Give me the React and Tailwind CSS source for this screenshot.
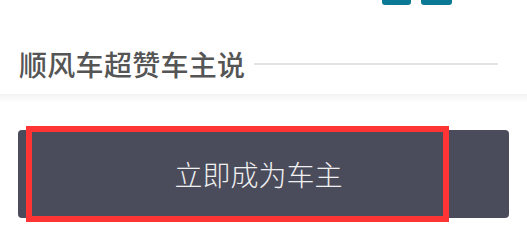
const App = () => {
  return (
    <div className="w-[527px] h-[244px] bg-white overflow-hidden flex flex-col" style={{ fontFamily: '"Noto Sans CJK SC", "Noto Sans", sans-serif' }}>
      {/* bottom of banner image */}
      <div className="flex h-[5px] pl-[382px] gap-[10px]">
        <div className="w-[29px] h-[5px] bg-[#0b7896] rounded-b-[3px]"></div>
        <div className="w-[31px] h-[5px] bg-[#0b7896] rounded-b-[3px]"></div>
      </div>

      <div className="mt-[45px] flex items-center pl-[19px] pr-[29px]">
        <h3 className="text-[28px] leading-none font-medium text-[#555555] whitespace-nowrap tracking-[0.3px]">顺风车超赞车主说</h3>
        <div className="flex-1 ml-[9px] h-[2px] bg-[#e3e3e3]"></div>
      </div>

      <div className="mt-[16px] h-[9px] bg-gradient-to-b from-[#f3f3f3] to-white"></div>

      <div className="mt-[27px] mx-[18px] h-[88px] bg-[#4a4b5b] rounded-[4px] relative flex items-center justify-center pr-[10px]">
        <span className="text-[28px] leading-none font-light text-[#f0f0f0]">立即成为车主</span>
        <div className="absolute left-[8px] top-[-4px] w-[423px] h-[96px] border-[6px] border-[#ff3535]"></div>
      </div>
    </div>
  )
}

export default App
